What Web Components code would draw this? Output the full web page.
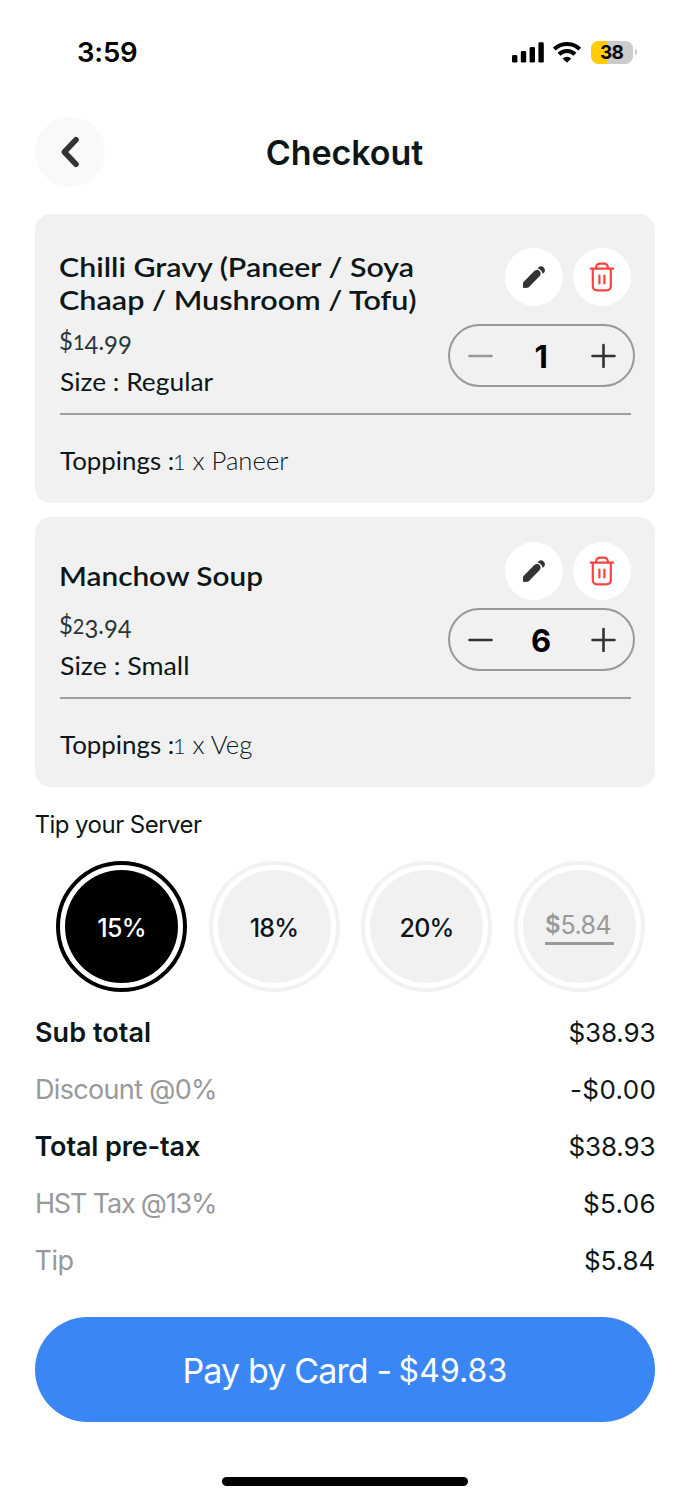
<!DOCTYPE html>
<html lang="en">
<head>
<meta charset="utf-8">
<title>Checkout</title>
<style>
html, body { margin: 0; background: #fff; }
body { width: 690px; height: 1500px; overflow: hidden; font-family: Inter, "Liberation Sans", sans-serif; color: #0d1718; }
</style>
</head>
<body>
<checkout-screen></checkout-screen>
<script>
const INTER = 'Inter, "Liberation Sans", sans-serif';
const LATO = 'Lato, "Open Sans", sans-serif';
const ctx = document.createElement('canvas').getContext('2d');

class Base extends HTMLElement {
  connectedCallback() {
    if (this.shadowRoot) return;
    this.attachShadow({ mode: 'open' }).innerHTML = this.view();
    if (this.ready) this.ready();
  }
  a(name, fallback = '') { return this.hasAttribute(name) ? this.getAttribute(name) : fallback; }
}

/* A single line of text whose visible glyphs span exactly `w` pixels. */
customElements.define('fit-text', class extends Base {
  view() {
    const size = this.a('size', '26'), weight = this.a('weight', '400');
    const family = this.a('face') === 'lato' ? LATO : INTER;
    let body = this.textContent;
    if (this.hasAttribute('osf')) {
      body = [...body].map(c => /[012]/.test(c) ? `<span class="s">${c}</span>` : /[34579]/.test(c) ? `<span class="d">${c}</span>` : c).join('');
    }
    return `<style>
      :host { display: block; flex: none; width: ${this.a('w')}px; line-height: ${this.a('lh', '40')}px; }
      .t { display: block; width: max-content; white-space: pre; font: ${weight} ${size}px ${family}; line-height: inherit; transform-origin: 0 50%; }
      .s { font-size: .84em; line-height: 0; }
      .d { vertical-align: -4px; line-height: 0; }
    </style><span class="t">${body}</span>`;
  }
  ready() {
    const t = this.shadowRoot.querySelector('.t');
    const text = this.textContent, n = text.length - 1;
    const cs = getComputedStyle(t);
    ctx.font = `${cs.fontWeight} ${cs.fontSize} ${cs.fontFamily}`;
    const m = ctx.measureText(text);
    const bearings = m.width - (m.actualBoundingBoxLeft + m.actualBoundingBoxRight);
    const ink = t.getBoundingClientRect().width - bearings;
    const target = +this.a('w');
    if (this.a('face') === 'lato') t.style.transform = `scaleX(${target / ink})`;
    else if (n > 0) t.style.letterSpacing = (target - ink) / n + 'px';
    t.style.marginLeft = m.actualBoundingBoxLeft + 'px';
  }
});

customElements.define('status-bar', class extends Base {
  view() { return `<style>
    :host { display: flex; height: 104px; align-items: center; padding: 0 53.5px 0 78px; color: #000; }
    .icons { margin-left: auto; display: flex; align-items: center; }
    .bat { display: flex; align-items: center; justify-content: center; width: 41.5px; height: 23px; border-radius: 7.5px; margin-left: 10px; background: linear-gradient(90deg, #ffcc00 16px, #cbcbcb 16px); }
    .nub { width: 2px; height: 6px; margin-left: 2px; border-radius: 0 3px 3px 0; background: #cbcbcb; }
    svg { display: block; }
  </style>
  <fit-text w="59" size="27.5" weight="600">3:59</fit-text>
  <div class="icons">
    <svg width="32" height="21" viewBox="0 0 32 21"><rect x="0" y="13" width="5.4" height="7.6" rx="1.4"/><rect x="8.8" y="9" width="5.4" height="11.6" rx="1.4"/><rect x="17.6" y="5" width="5.4" height="15.6" rx="1.4"/><rect x="26.4" y=".3" width="5.4" height="20.3" rx="1.4"/></svg>
    <svg style="margin-left:9.5px" width="28" height="21" viewBox="0 0 28 21"><g fill="none" stroke="#000" stroke-width="4.1"><path d="M1.4 7.1a18.2 18.2 0 0 1 25.2 0"/><path d="M6 12.3a11.5 11.5 0 0 1 16 0"/></g><path d="M14 20.7l-4.3-4.3a6.2 6.2 0 0 1 8.6 0z"/></svg>
    <div class="bat"><fit-text w="23.5" size="19" weight="700" lh="23">38</fit-text></div><div class="nub"></div>
  </div>`; }
});

customElements.define('page-header', class extends Base {
  view() { return `<style>
    :host { display: grid; grid-template-columns: 70px 1fr 70px; align-items: center; height: 96px; padding: 0 35px; }
    .back { width: 70px; height: 70px; border-radius: 50%; background: #f9f9f9; display: grid; place-items: center; }
    fit-text { justify-self: center; padding-top: 2px; }
  </style>
  <div class="back"><svg width="70" height="70" viewBox="0 0 70 70" fill="none" stroke="#333" stroke-width="5.6" stroke-linecap="round" stroke-linejoin="round"><path d="M41 22.7 29.3 35 41 47.2"/></svg></div>
  <fit-text w="156.5" size="34" weight="600" lh="60">${this.a('heading')}</fit-text><span></span>`; }
});

customElements.define('round-action', class extends Base {
  view() {
    const icons = {
      edit: '<g fill="#333"><path d="M18 35.6q0-1 .8-1.8L29 23.2q3-2.8 5.3-.4 2.6 2.4.2 5.4L24.3 38.8q-.8.8-1.9.9l-3.5.3q-1 0-.9-1z"/><path d="M32.4 20.3 34 18.9q2.4-1.6 4.7.7 2.2 2.4.6 4.7l-1.5 1.7q-1-4.1-5.4-5.7z"/></g>',
      remove: '<g fill="none" stroke="#fb4343" stroke-width="2.2" stroke-linecap="round"><path d="M17.8 20.7h22.4M23 20q.6-4.4 4-4.4h4q3.4 0 4 4.4M19.8 21v17q0 4.3 4.5 4.3h9q4.5 0 4.5-4.3V21"/><path d="M26.4 27.6v7.8M31.4 27.6v7.8"/></g>'
    };
    return `<style>:host { display: block; width: 58px; height: 58px; border-radius: 50%; background: #fff; } svg { display: block; }</style>
    <svg width="58" height="58" viewBox="0 0 58 58">${icons[this.a('icon')]}</svg>`;
  }
});

customElements.define('qty-stepper', class extends Base {
  view() {
    const off = this.a('value') === '1';
    return `<style>
    :host { box-sizing: border-box; display: grid; grid-template-columns: 25px 1fr 25px; align-items: center; justify-items: center; width: 187px; height: 63px; padding: 0 17px 0 18px; border: 2px solid #999; border-radius: 32px; color: #000; }
    svg { display: block; } path { stroke: #333; stroke-width: 2.6; stroke-linecap: round; } .off path { stroke: #999; }
    fit-text { margin-top: 2px; }
    </style>
    <svg class="${off ? 'off' : ''}" width="25" height="25"><path d="M1.5 13h22"/></svg>
    <fit-text w="${off ? 13 : 20}" size="31" weight="700">${this.a('value')}</fit-text>
    <svg width="25" height="25"><path d="M1.5 13h22M12.5 2v22"/></svg>`;
  }
});

customElements.define('cart-item', class extends Base {
  view() {
    const [pw, sw, tw] = this.a('widths').split(',');
    return `<style>
    :host { box-sizing: border-box; display: block; margin: 0 35px; padding: 0 24.5px; background: #f1f1f1; border-radius: 16px; }
    .top { display: flex; justify-content: space-between; box-sizing: border-box; height: var(--top-height); border-bottom: 2px solid #a0a0a0; }
    .info { display: flex; flex-direction: column; justify-content: flex-end; padding: 0 0 12.5px .5px; }
    .name { margin-bottom: var(--name-gap); }
    .side { display: flex; flex-direction: column; justify-content: space-between; margin-right: -4.5px; padding-bottom: 26px; padding-top: var(--side-top); }
    .actions { display: flex; gap: 10px; justify-content: flex-end; margin-right: 4.5px; }
    .extra { display: flex; gap: 2.5px; padding: 25px 0 0; height: 40px; }
    .price { color: #2b3536; }
    </style>
    <div class="top"><div class="info"><div class="name"><slot></slot></div>
      <fit-text class="price" face="lato" size="24.5" weight="400" osf w="${pw}">${this.a('price')}</fit-text>
      <fit-text face="lato" size="25" w="${sw}">${this.a('size')}</fit-text></div>
      <div class="side"><div class="actions"><round-action icon="edit"></round-action><round-action icon="remove"></round-action></div><qty-stepper value="${this.a('qty')}"></qty-stepper></div></div>
    <div class="extra"><fit-text face="lato" size="25" w="113">Toppings :</fit-text><fit-text face="lato" size="25" weight="300" osf w="${tw}">${this.a('topping')}</fit-text></div>`;
  }
});

customElements.define('tip-option', class extends Base {
  view() { return `<style>
    :host { box-sizing: border-box; display: grid; width: 131px; height: 131px; padding: 5px; border: 4px solid #f2f2f2; border-radius: 50%; }
    :host([selected]) { border-color: #000; color: #fff; }
    .disc { display: grid; place-items: center; border-radius: 50%; background: #f1f1f1; padding-top: 2px; margin-bottom: 0; box-sizing: border-box; }
    :host([selected]) .disc { background: #000; }
  </style><div class="disc"><slot></slot></div>`; }
});

customElements.define('custom-tip', class extends Base {
  view() { return `<style>
    :host { display: flex; gap: 3px; width: 69px; height: 34px; padding: 0 0 0 1.5px; color: #999; border-bottom: 3px solid #999; box-sizing: border-box; }
  </style><fit-text w="12.5" size="24" weight="600" lh="28">$</fit-text><fit-text w="49" size="25" lh="28">5.84</fit-text>`; }
});

customElements.define('sum-row', class extends Base {
  view() {
    const strong = this.hasAttribute('strong');
    return `<style>
    :host { display: flex; justify-content: space-between; height: 57px; }
    .l { color: ${strong ? 'inherit' : '#999'}; margin-left: ${this.a('inset', '1')}px; } .v { margin-right: .5px; }
    </style><fit-text class="l" lh="57" size="27" weight="${strong ? 600 : 400}" w="${this.a('lw')}">${this.a('label')}</fit-text><fit-text class="v" lh="57" size="26" w="${this.a('vw')}">${this.a('value')}</fit-text>`;
  }
});

customElements.define('pay-button', class extends Base {
  view() { return `<style>
    :host { box-sizing: border-box; display: flex; align-items: center; justify-content: center; height: 104.5px; margin: 28px 35px 0; padding-top: 3px; border-radius: 53px; background: #3a86f4; color: #fff; gap: 9px; }
  </style><fit-text w="206" size="34" lh="60">Pay by Card -</fit-text><fit-text w="106" size="32" lh="60">$49.83</fit-text>`; }
});

customElements.define('checkout-screen', class extends Base {
  view() { return `<style>
    :host { display: block; width: 690px; height: 1500px; }
    page-header { margin-bottom: 14px; }
    .one { --top-height: 201px; --name-gap: 5px; --side-top: 34px; height: 288.5px; }
    .two { --top-height: 182px; --name-gap: 12.5px; --side-top: 25px; height: 269.5px; margin-top: 14.5px; }
    .soup { margin-left: 1px; }
    .tip-title { margin: 18.5px 0 0 35.5px; }
    .tips { display: flex; justify-content: space-between; margin: 16px 45.5px 0 56px; }
    .sums { margin: 12px 35px 0; }
    .home { width: 246px; height: 8.5px; margin: 55.5px auto 0; border-radius: 5px; background: #000; }
  </style>
  <status-bar></status-bar>
  <page-header heading="Checkout"></page-header>
  <cart-item class="one" price="$14.99" size="Size : Regular" qty="1" topping="1 x Paneer" widths="70.7,153,113.5">
    <fit-text face="lato" size="27.5" weight="600" lh="33" w="353">Chilli Gravy (Paneer / Soya</fit-text>
    <fit-text face="lato" size="27.5" weight="600" lh="33" w="356">Chaap / Mushroom / Tofu)</fit-text>
  </cart-item>
  <cart-item class="two" price="$23.94" size="Size : Small" qty="6" topping="1 x Veg" widths="71.4,128.5,77.5">
    <fit-text class="soup" face="lato" size="27.5" weight="600" lh="33" w="201.3">Manchow Soup</fit-text>
  </cart-item>
  <fit-text class="tip-title" size="24" w="166.5">Tip your Server</fit-text>
  <div class="tips">
    <tip-option selected><fit-text w="46.5" size="25" weight="500">15%</fit-text></tip-option>
    <tip-option><fit-text w="46.5" size="25" weight="500">18%</fit-text></tip-option>
    <tip-option><fit-text w="52" size="25" weight="500">20%</fit-text></tip-option>
    <tip-option><custom-tip></custom-tip></tip-option>
  </div>
  <div class="sums">
    <sum-row strong label="Sub total" lw="114" value="$38.93" vw="85"></sum-row>
    <sum-row label="Discount @0%" inset="2" lw="178" value="-$0.00" vw="83.5"></sum-row>
    <sum-row strong label="Total pre-tax" inset=".5" lw="164.5" value="$38.93" vw="85"></sum-row>
    <sum-row label="HST Tax @13%" inset="2" lw="178" value="$5.06" vw="70.5"></sum-row>
    <sum-row label="Tip" inset=".5" lw="38" value="$5.84" vw="69.5"></sum-row>
  </div>
  <pay-button></pay-button>
  <div class="home"></div>`; }
});
</script>
</body>
</html>
